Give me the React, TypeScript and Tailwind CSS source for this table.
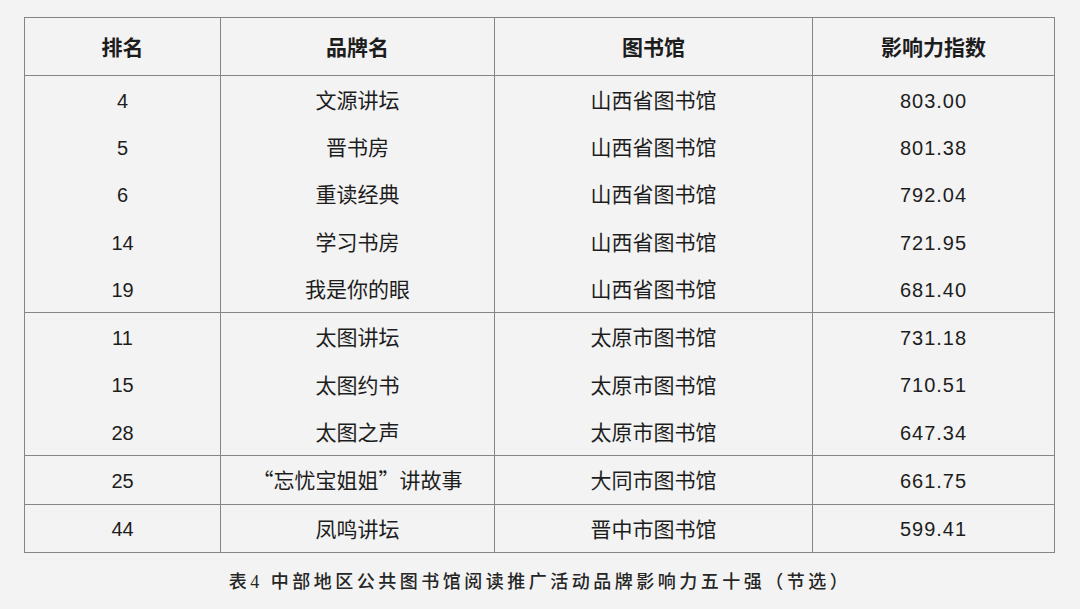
import React from "react";

type Row = { rank: string; name: string; lib: string; score: string };

const groups: Row[][] = [
  [
    { rank: "4", name: "文源讲坛", lib: "山西省图书馆", score: "803.00" },
    { rank: "5", name: "晋书房", lib: "山西省图书馆", score: "801.38" },
    { rank: "6", name: "重读经典", lib: "山西省图书馆", score: "792.04" },
    { rank: "14", name: "学习书房", lib: "山西省图书馆", score: "721.95" },
    { rank: "19", name: "我是你的眼", lib: "山西省图书馆", score: "681.40" },
  ],
  [
    { rank: "11", name: "太图讲坛", lib: "太原市图书馆", score: "731.18" },
    { rank: "15", name: "太图约书", lib: "太原市图书馆", score: "710.51" },
    { rank: "28", name: "太图之声", lib: "太原市图书馆", score: "647.34" },
  ],
  [{ rank: "25", name: "“忘忧宝姐姐”讲故事", lib: "大同市图书馆", score: "661.75" }],
  [{ rank: "44", name: "凤鸣讲坛", lib: "晋中市图书馆", score: "599.41" }],
];

const cols = "grid grid-cols-[196px_274px_318px_1fr]";
const cell = "flex items-center justify-center border-r border-[#858585]";
const cellLast = "flex items-center justify-center";

export default function App() {
  return (
    <div className="w-[1080px] h-[609px] bg-[#f3f3f3] pt-[17px] text-[#1d1d1d]">
      <div className="ml-[24px] w-[1031px] border border-[#858585]">
        <div
          className={`${cols} h-[58px] border-b border-[#858585] text-[21px] font-bold`}
          style={{ fontFamily: '"Noto Sans CJK SC", sans-serif' }}
        >
          <div className={cell}>排名</div>
          <div className={cell}>品牌名</div>
          <div className={cell}>图书馆</div>
          <div className={cellLast}>影响力指数</div>
        </div>
        {groups.map((g, gi) => (
          <div key={gi} className={gi > 0 ? "border-t border-[#858585]" : ""}>
            {g.map((r, ri) => (
              <div key={ri} className={`${cols} h-[47.3px] text-[20px]`}>
                <div
                  className={cell}
                  style={{ fontFamily: '"Liberation Sans", "Noto Sans CJK SC", sans-serif' }}
                >
                  <span className="pt-[2px]">{r.rank}</span>
                </div>
                <div className={cell} style={{ fontFamily: '"Noto Sans CJK SC", sans-serif' }}>
                  <span className="text-[21px]">{r.name}</span>
                </div>
                <div className={cell} style={{ fontFamily: '"Noto Sans CJK SC", sans-serif' }}>
                  <span className="text-[21px]">{r.lib}</span>
                </div>
                <div
                  className={cellLast}
                  style={{ fontFamily: '"Liberation Sans", "Noto Sans CJK SC", sans-serif' }}
                >
                  <span className="tracking-[1px] pt-[2px]">{r.score}</span>
                </div>
              </div>
            ))}
          </div>
        ))}
      </div>
      <div
        className="mt-[16px] text-center text-[18px] tracking-[3.5px] text-[#262626] font-medium"
        style={{ fontFamily: '"Liberation Serif", "Noto Sans CJK SC", serif' }}
      >
        表4 中部地区公共图书馆阅读推广活动品牌影响力五十强（节选）
      </div>
    </div>
  );
}
